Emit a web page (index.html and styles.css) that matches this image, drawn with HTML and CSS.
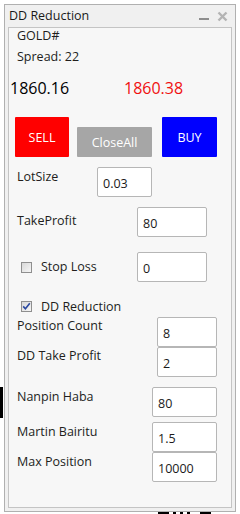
FILE: index.html
```html
<!DOCTYPE html>
<html>
<head>
<meta charset="utf-8">
<link rel="stylesheet" href="styles.css">
</head>
<body>
<div class="window">
  <div class="titlebar">
    <span class="title">DD Reduction</span>
    <span class="tb-btns">
      <svg class="tb-min" width="12" height="12" viewBox="0 0 12 12"><rect x="1" y="7" width="10" height="2" fill="#8e8e8e"/></svg>
      <svg class="tb-close" width="11" height="11" viewBox="0 0 11 11"><path d="M1.5 1.5 L9.5 9.5 M9.5 1.5 L1.5 9.5" stroke="#b4b4b4" stroke-width="2.4"/></svg>
    </span>
  </div>
  <div class="panel">
    <div class="sym">GOLD#</div>
    <div class="spread">Spread: 22</div>
    <div class="prices"><span class="bid">1860.16</span><span class="ask">1860.38</span></div>
    <div class="buttons">
      <div class="btn sell">SELL</div>
      <div class="btn close">CloseAll</div>
      <div class="btn buy">BUY</div>
    </div>
    <div class="row r-lot"><span class="lbl">LotSize</span><input class="fld w55" type="text" value="0.03"></div>
    <div class="row r-tp"><span class="lbl">TakeProfit</span><input class="fld w70" type="text" value="80"></div>
    <div class="row r-sl">
      <span class="chk"></span><span class="lbl">Stop Loss</span><input class="fld w70" type="text" value="0">
    </div>
    <div class="row r-dd">
      <span class="chk"><svg width="9" height="9" viewBox="0 0 9 9"><path d="M1.2 4.4 L3.4 6.8 L7.8 1.2" fill="none" stroke="#2b48a0" stroke-width="1.6"/></svg></span><span class="lbl">DD Reduction</span>
    </div>
    <div class="row r-pc"><span class="lbl">Position Count</span><input class="fld w60" type="text" value="8"></div>
    <div class="row r-ddtp"><span class="lbl">DD Take Profit</span><input class="fld w60" type="text" value="2"></div>
    <div class="row r-nh"><span class="lbl">Nanpin Haba</span><input class="fld w65" type="text" value="80"></div>
    <div class="row r-mb"><span class="lbl">Martin Bairitu</span><input class="fld w65" type="text" value="1.5"></div>
    <div class="row r-mp"><span class="lbl">Max Position</span><input class="fld w65" type="text" value="10000"></div>
  </div>
</div>
<div class="edge-bar"></div>
<div class="bottom-marks"><span class="m1"></span><span class="m2"></span><span class="m3"></span><span class="m4"></span><span class="m5"></span></div>
</body>
</html>
```
FILE: styles.css
```css
html, body {
  margin: 0;
  padding: 0;
  background: #ffffff;
  width: 240px;
  height: 514px;
  overflow: hidden;
  font-family: "Open Sans", "Noto Sans", sans-serif;
  font-size: 12.5px;
  color: #221e1c;
  position: relative;
}
.window {
  box-sizing: border-box;
  margin: 4px 0 0 4px;
  width: 232px;
  height: 508px;
  border: 1px solid #b0b0b0;
  background: #f0f0f0;
  padding: 0 3px 3px 3px;
  display: flex;
  flex-direction: column;
}
.titlebar {
  height: 22px;
  flex: none;
  display: flex;
  align-items: center;
  justify-content: space-between;
  padding-left: 1px;
}
.title {
  font-size: 12.5px;
  color: #1a1a1a;
  line-height: 16px;
}
.tb-btns {
  display: flex;
  align-items: center;
  gap: 7px;
  margin-right: 4px;
}
.tb-min { margin-top: 2px; }
.panel {
  box-sizing: border-box;
  flex: 1;
  border: 1px solid #c4c4c4;
  background: #f7f7f7;
  display: flex;
  flex-direction: column;
}
.sym, .spread {
  line-height: 16px;
  padding-left: 8px;
}
.spread { margin-top: 5px; }
.prices {
  margin-top: 13px;
  height: 20px;
  line-height: 20px;
  font-size: 16px;
  display: flex;
  padding-left: 1px;
}
.bid { color: #000; width: 114px; }
.ask { color: #f01010; }
.buttons {
  margin-top: 19px;
  height: 40px;
  display: flex;
  align-items: flex-end;
  padding-left: 6px;
}
.btn {
  color: #fff;
  display: flex;
  align-items: center;
  justify-content: center;
  border-radius: 1px;
  font-size: 12.5px;
}
.sell { background: #ff0000; width: 54px; height: 40px; }
.close { background: #a6a6a6; width: 75px; height: 30px; margin-left: 8px; }
.buy { background: #0000ff; width: 55px; height: 40px; margin-left: 10px; }
.row {
  display: flex;
  align-items: flex-start;
  height: 30px;
}
.lbl {
  box-sizing: border-box;
  line-height: 16px;
  padding-left: 8px;
  flex: none;
}
.fld {
  box-sizing: border-box;
  height: 30px;
  border: 1px solid #b6b6b6;
  border-radius: 2px;
  background: #fff;
  padding: 2px 0 0 5px;
  margin: 0;
  font-family: "Open Sans", "Noto Sans", sans-serif;
  font-size: 12.5px;
  color: #1a1a1a;
  outline: none;
}
.w55 { width: 55px; }
.w60 { width: 60px; }
.w65 { width: 65px; }
.w70 { width: 70px; }
.r-lot { margin-top: 10px; }
.r-lot .lbl { width: 88px; margin-top: 2px; }
.r-tp { margin-top: 10px; }
.r-tp .lbl { width: 128px; margin-top: 6px; }
.r-sl { margin-top: 15px; }
.chk {
  box-sizing: border-box;
  flex: none;
  width: 11px;
  height: 11px;
  border: 1px solid #8f8f8f;
  background: linear-gradient(135deg, #d8d8d8, #f6f6f6);
  margin-left: 12px;
  display: flex;
  align-items: center;
  justify-content: center;
}
.r-sl .chk { margin-top: 10px; }
.r-sl .lbl { width: 105px; padding-left: 9px; margin-top: 7px; }
.r-dd { margin-top: 17px; height: 16px; }
.r-dd .chk { margin-top: 2px; }
.r-dd .lbl { padding-left: 9px; }
.r-pc { margin-top: 2px; }
.r-pc .lbl, .r-ddtp .lbl { width: 148px; margin-top: 1px; }
.r-ddtp { margin-top: 0; }
.r-nh { margin-top: 10px; }
.r-mb { margin-top: 5px; }
.r-mp { margin-top: 0; }
.r-nh .lbl, .r-mb .lbl, .r-mp .lbl { width: 143px; margin-top: 2px; }
.edge-bar {
  position: absolute;
  left: 0;
  top: 387px;
  width: 3px;
  height: 31px;
  background: #000;
}
.bottom-marks {
  position: absolute;
  left: 158px;
  top: 512px;
  height: 2px;
  display: flex;
  gap: 4px;
}
.bottom-marks span { background: #000; height: 2px; display: block; }
.m1 { width: 11px; }
.m2 { width: 3px; }
.m3 { width: 3px; }
.m4 { width: 3px; }
.m5 { width: 11px; margin-left: 6px; }
```
